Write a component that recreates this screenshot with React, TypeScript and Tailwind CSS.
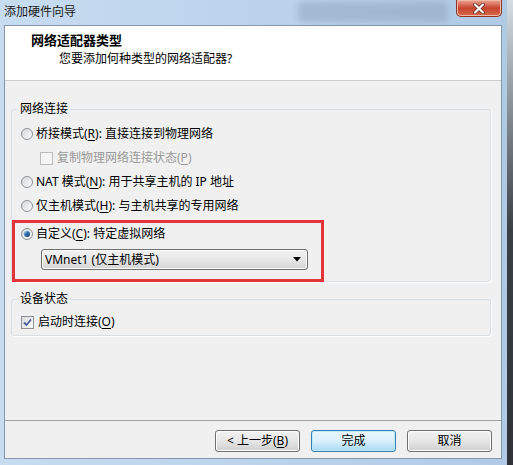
import React from 'react';

const font = "font-['Noto_Sans','Noto_Sans_CJK_SC',sans-serif]";

function U({ c }: { c: string }) {
  return <span className="underline underline-offset-[2px]">{c}</span>;
}

function Radio({ checked }: { checked?: boolean }) {
  return (
    <span className="flex h-[12px] w-[12px] shrink-0 items-center justify-center rounded-full border border-[#8e9297] bg-linear-to-br from-[#d4d6d9] to-[#fbfbfb]">
      {checked && (
        <span className="h-[6px] w-[6px] rounded-full bg-linear-to-br from-[#8fc3ea] via-[#2c6aa4] to-[#163a60]" />
      )}
    </span>
  );
}

function Check({ checked, disabled }: { checked?: boolean; disabled?: boolean }) {
  return (
    <span
      className={
        disabled
          ? 'flex h-[13px] w-[13px] shrink-0 items-center justify-center border border-[#bcbcbc] bg-[#f4f4f4]'
          : 'flex h-[13px] w-[13px] shrink-0 items-center justify-center border border-[#8e9297] bg-linear-to-br from-[#d9dbde] to-[#fbfbfb]'
      }
    >
      {checked && (
        <svg width="9" height="9" viewBox="0 0 9 9">
          <path d="M1 4.5 L3.5 7 L8 1.5" fill="none" stroke="#4a5e99" strokeWidth="1.8" />
        </svg>
      )}
    </span>
  );
}

function Button({ children, primary }: { children: React.ReactNode; primary?: boolean }) {
  return (
    <div
      className={
        primary
          ? 'flex h-[22px] w-[85px] items-center justify-center rounded-[3px] border border-[#3c7fb1] bg-linear-to-b from-[#eaf6fd] via-[#d9f0fc] to-[#a7d9f5] shadow-[inset_0_0_0_1px_#bfe8fb] text-[12px] leading-[16px] text-black'
          : 'flex h-[22px] w-[85px] items-center justify-center rounded-[3px] border border-[#707070] bg-linear-to-b from-[#f2f2f2] via-[#e6e6e6] to-[#d0d0d0] shadow-[inset_0_0_0_1px_#fcfcfc] text-[12px] leading-[16px] text-black'
      }
    >
      {children}
    </div>
  );
}

export default function App() {
  return (
    <div className={`flex h-[465px] w-[513px] overflow-hidden bg-[#3a3f46] ${font}`}>
      {/* window frame */}
      <div className="flex h-full w-[507px] flex-col bg-linear-to-r from-[#c8dcf0] via-[#bcd3ec] to-[#b0cae6] pb-[6px] pl-[4px] pr-[5px]">
        {/* title bar */}
        <div className="flex h-[25px] items-start">
          <span className="pt-[4px] text-[12px] leading-[16px] text-[#1b1b1b]">添加硬件向导</span>
          <div className="ml-auto mr-[8px] mt-[2px] h-[20px] w-[150px] rounded-[4px] bg-[#8397ad]/40 blur-[3px]" />
          <div className="flex h-[17px] w-[46px] items-center justify-center rounded-b-[5px] border border-t-0 border-[#8c3426] bg-linear-to-b from-[#e9a795] via-[#c7432e] to-[#d66a4c] shadow-[inset_0_0_0_1px_#f2b8a6]">
            <svg width="12" height="11" viewBox="0 0 12 11">
              <path d="M2 1.5 L10 9.5 M10 1.5 L2 9.5" stroke="#5a2418" strokeWidth="3.6" strokeLinecap="round" />
              <path d="M2 1.5 L10 9.5 M10 1.5 L2 9.5" stroke="#ffffff" strokeWidth="2.2" strokeLinecap="round" />
            </svg>
          </div>
        </div>

        {/* client area */}
        <div className="flex flex-1 flex-col border border-[#8797aa] bg-[#f0f0f0]">
          <div className="h-[55px] border-b border-[#cfcfcf] bg-white">
            <div className="pl-[26px] pt-[6px] text-[13px] font-bold leading-[16px] text-black">网络适配器类型</div>
            <div className="mt-[3px] pl-[54px] text-[12px] leading-[16px] text-black">您要添加何种类型的网络适配器?</div>
          </div>

          <div className="flex-1 pl-[6px] pr-[10px] text-[12px] leading-[16px] text-black">
            <fieldset className="relative mt-[20px] rounded-[3px] border border-[#d5dfe5] pb-[11px] shadow-[1px_1px_0_#ffffff]">
              <legend className="ml-[6px] px-[2px] text-[12px] leading-[16px]">网络连接</legend>
              <div className="flex flex-col pl-[9px] pt-[5px]">
                <div className="flex h-[24px] items-center gap-[3px]">
                  <Radio />
                  <span>
                    桥接模式(<U c="R" />): 直接连接到物理网络
                  </span>
                </div>
                <div className="flex h-[24px] items-center gap-[4px] pl-[19px] text-[#9a9a9a]">
                  <Check disabled />
                  <span>
                    复制物理网络连接状态(<U c="P" />)
                  </span>
                </div>
                <div className="flex h-[24px] items-center gap-[3px]">
                  <Radio />
                  <span>
                    NAT 模式(<U c="N" />): 用于共享主机的 IP 地址
                  </span>
                </div>
                <div className="flex h-[24px] items-center gap-[3px]">
                  <Radio />
                  <span>
                    仅主机模式(<U c="H" />): 与主机共享的专用网络
                  </span>
                </div>
                <div className="mt-[4px] flex h-[24px] items-center gap-[3px]">
                  <Radio checked />
                  <span>
                    自定义(<U c="C" />): 特定虚拟网络
                  </span>
                </div>
                <div className="ml-[20px] mt-[3px] flex h-[21px] w-[267px] items-center rounded-[3px] border border-[#707070] bg-linear-to-b from-[#f2f2f2] via-[#e8e8e8] to-[#d4d4d4] pl-[3px] pr-[6px] shadow-[inset_0_0_0_1px_#fbfbfb]">
                  <span>VMnet1 (仅主机模式)</span>
                  <svg className="ml-auto" width="8" height="5" viewBox="0 0 8 5">
                    <path d="M0 0 H8 L4 4.5 Z" fill="#000000" />
                  </svg>
                </div>
              </div>
              {/* highlight annotation */}
              <div className="pointer-events-none absolute bottom-[-1px] left-0 h-[62px] w-[312px] border-[3px] border-[#e5333b]" />
            </fieldset>

            <fieldset className="mt-[9px] rounded-[3px] border border-[#d5dfe5] pb-[5px] shadow-[1px_1px_0_#ffffff]">
              <legend className="ml-[6px] px-[2px] text-[12px] leading-[16px]">设备状态</legend>
              <div className="flex h-[16px] items-center gap-[4px] pl-[9px] mt-[7px]">
                <Check checked />
                <span>
                  启动时连接(<U c="O" />)
                </span>
              </div>
            </fieldset>
          </div>

          <div className="flex h-[38px] justify-end gap-[11px] border-t border-[#a0a0a0] pr-[9px] pt-[9px]">
            <Button>
              &lt; 上一步(<U c="B" />)
            </Button>
            <Button primary>完成</Button>
            <Button>取消</Button>
          </div>
        </div>
      </div>
      <div className="flex-1 bg-linear-to-b from-[#d7dde4] via-[#3a3f46] to-[#2f3339]" />
    </div>
  );
}
